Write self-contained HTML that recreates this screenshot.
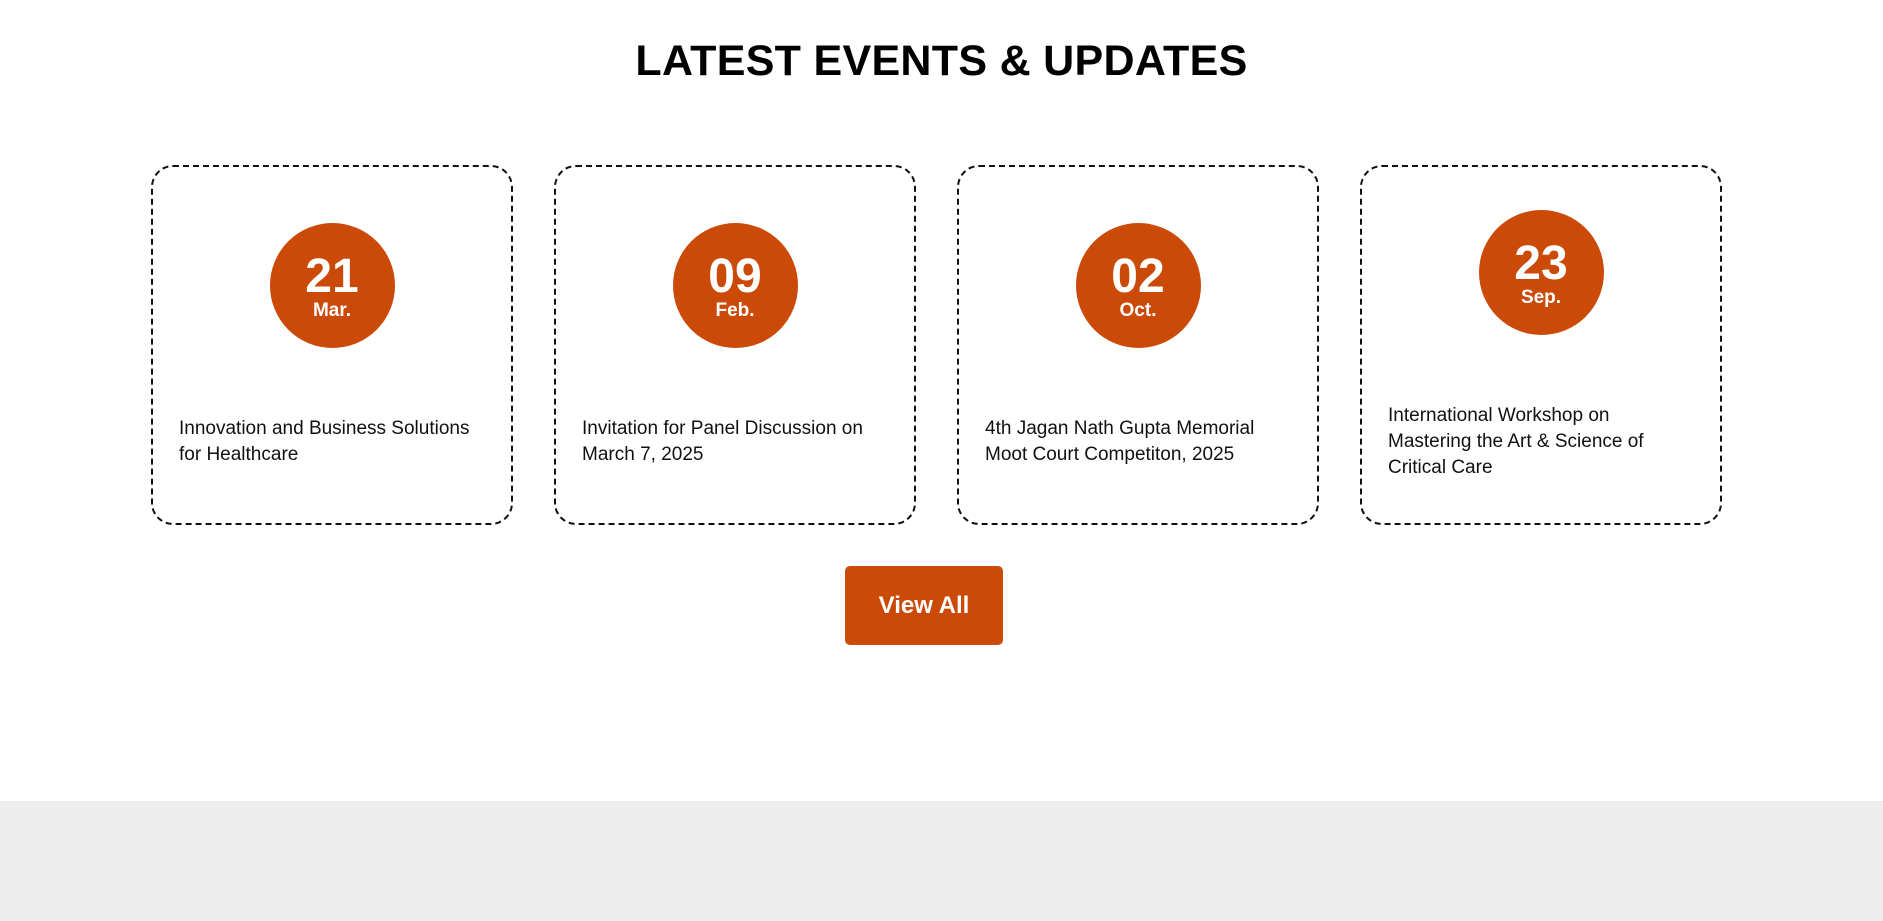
<!DOCTYPE html>
<html><head><meta charset="utf-8"><style>
*{margin:0;padding:0;box-sizing:border-box}
body{width:1883px;height:921px;background:#fff;font-family:"Liberation Sans",sans-serif;position:relative;overflow:hidden}
h1{position:absolute;top:37px;left:0;width:100%;text-align:center;font-size:43px;font-weight:bold;color:#000;letter-spacing:0.3px}
.card{position:absolute;top:165px;width:362px;height:360px;border:2px dashed #111;border-radius:22px;display:flex;flex-direction:column;justify-content:center;padding:0 26px}
.circle{width:125px;height:125px;border-radius:50%;background:#cb4a07;color:#fff;margin:0 auto 68px;display:flex;flex-direction:column;align-items:center;justify-content:center;font-weight:bold}
.circle .d{font-size:48px;line-height:48px;margin-top:4px}
.circle .m{font-size:19px;line-height:20px}
.t{font-size:19px;line-height:26px;color:#111}
.btn{position:absolute;left:845px;top:566px;width:158px;height:79px;background:#cb4a07;border-radius:5px;color:#fff;font-weight:bold;font-size:24px;display:flex;align-items:center;justify-content:center}
.foot{position:absolute;left:0;top:801px;width:100%;height:120px;background:#ededed}
</style></head><body>
<h1>LATEST EVENTS &amp; UPDATES</h1>
<div class="card" style="left:151px"><div class="circle"><div class="d">21</div><div class="m">Mar.</div></div><div class="t">Innovation and Business Solutions for Healthcare</div></div>
<div class="card" style="left:554px"><div class="circle"><div class="d">09</div><div class="m">Feb.</div></div><div class="t">Invitation for Panel Discussion on March 7, 2025</div></div>
<div class="card" style="left:957px"><div class="circle"><div class="d">02</div><div class="m">Oct.</div></div><div class="t">4th Jagan Nath Gupta Memorial Moot Court Competiton, 2025</div></div>
<div class="card" style="left:1360px"><div class="circle"><div class="d">23</div><div class="m">Sep.</div></div><div class="t">International Workshop on Mastering the Art &amp; Science of Critical Care</div></div>
<div class="btn">View All</div>
<div class="foot"></div>
</body></html>
